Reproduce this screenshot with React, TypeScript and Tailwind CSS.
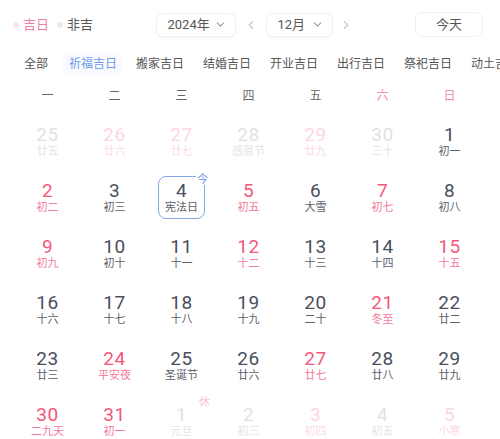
import React from 'react';
import { ChevronDown, ChevronLeft, ChevronRight } from 'lucide-react';

type Kind = 'n' | 'r' | 'fg' | 'fp';

interface Cell {
  day: number;
  lunar: string;
  kind: Kind;
  today?: boolean;
  badge?: string;
}

const c = (day: number, lunar: string, kind: Kind, extra: Partial<Cell> = {}): Cell => ({ day, lunar, kind, ...extra });

const weeks: Cell[][] = [
  [c(25, '廿五', 'fg'), c(26, '廿六', 'fp'), c(27, '廿七', 'fp'), c(28, '感恩节', 'fg'), c(29, '廿九', 'fp'), c(30, '三十', 'fg'), c(1, '初一', 'n')],
  [c(2, '初二', 'r'), c(3, '初三', 'n'), c(4, '宪法日', 'n', { today: true }), c(5, '初五', 'r'), c(6, '大雪', 'n'), c(7, '初七', 'r'), c(8, '初八', 'n')],
  [c(9, '初九', 'r'), c(10, '初十', 'n'), c(11, '十一', 'n'), c(12, '十二', 'r'), c(13, '十三', 'n'), c(14, '十四', 'n'), c(15, '十五', 'r')],
  [c(16, '十六', 'n'), c(17, '十七', 'n'), c(18, '十八', 'n'), c(19, '十九', 'n'), c(20, '二十', 'n'), c(21, '冬至', 'r'), c(22, '廿二', 'n')],
  [c(23, '廿三', 'n'), c(24, '平安夜', 'r'), c(25, '圣诞节', 'n'), c(26, '廿六', 'n'), c(27, '廿七', 'r'), c(28, '廿八', 'n'), c(29, '廿九', 'n')],
  [c(30, '二九天', 'r'), c(31, '初一', 'r'), c(1, '元旦', 'fg', { badge: '休' }), c(2, '初三', 'fg'), c(3, '初四', 'fp'), c(4, '初五', 'fg'), c(5, '小寒', 'fp')],
];

const weekdays = ['一', '二', '三', '四', '五', '六', '日'];
const tabs = ['全部', '祈福吉日', '搬家吉日', '结婚吉日', '开业吉日', '出行吉日', '祭祀吉日', '动土吉日'];

const numColor: Record<Kind, string> = {
  n: 'text-[#4a4f5d]',
  r: 'text-[#f5567c]',
  fg: 'text-[#e1e2e7]',
  fp: 'text-[#fdd7e0]',
};

const lunarColor: Record<Kind, string> = {
  n: 'text-[#5c606b]',
  r: 'text-[#f47a99]',
  fg: 'text-[#e3e4e9]',
  fp: 'text-[#fddbe3]',
};

const DayCell: React.FC<{ cell: Cell }> = ({ cell }) => (
  <div className="h-[56px] flex items-center justify-center">
    <div
      className={`relative w-[47px] h-[43px] flex flex-col items-center justify-center rounded-[8px] ${
        cell.today ? 'border-[1.5px] border-[#86a8e8]' : ''
      }`}
    >
      <span className={`text-[19px] leading-[21px] tracking-[0.5px] ${numColor[cell.kind]}`}>{cell.day}</span>
      <span className={`text-[11px] leading-[14px] ${lunarColor[cell.kind]}`}>{cell.lunar}</span>
      {cell.today && (
        <span className="absolute -top-[3px] -right-[5px] text-[11px] leading-none text-[#5d8ce8] bg-white px-[1px]">今</span>
      )}
      {cell.badge && (
        <span className="absolute -top-[3px] -right-[5px] text-[11px] leading-none text-[#f9c3d2]">{cell.badge}</span>
      )}
    </div>
  </div>
);

export default function App() {
  return (
    <div
      className="w-[500px] h-[439px] overflow-hidden bg-white"
      style={{ fontFamily: 'Roboto, "Noto Sans CJK SC", sans-serif' }}
    >
      {/* Header */}
      <div className="grid grid-cols-[1fr_auto_1fr] items-center pl-[13px] pr-[17px] pt-[12px] h-[37px]">
        <div className="flex items-center text-[13px]">
          <span className="w-[6px] h-[6px] rounded-full bg-[#fde3eb] mr-[4px]" />
          <span className="text-[#f07ea2]">吉日</span>
          <span className="w-[6px] h-[6px] rounded-full bg-[#e6eaf3] ml-[8px] mr-[4px]" />
          <span className="text-[#555]">非吉</span>
        </div>
        <div className="flex items-center text-[13px] text-[#555] ml-[12px]">
          <div className="w-[80px] h-[24px] border border-[#eef0f3] rounded-[6px] flex items-center justify-between pl-[11px] pr-[8px] shadow-[0_1px_2px_rgba(0,0,0,0.03)]">
            <span>2024年</span>
            <ChevronDown size={13} className="text-[#9a9a9a]" />
          </div>
          <ChevronLeft size={14} className="text-[#c8c8c8] mx-[8px]" />
          <div className="w-[67px] h-[24px] border border-[#eef0f3] rounded-[6px] flex items-center justify-between pl-[11px] pr-[8px] shadow-[0_1px_2px_rgba(0,0,0,0.03)]">
            <span>12月</span>
            <ChevronDown size={13} className="text-[#9a9a9a]" />
          </div>
          <ChevronRight size={14} className="text-[#c8c8c8] ml-[6px]" />
        </div>
        <div className="flex justify-end">
          <div className="w-[68px] h-[25px] border border-[#eef0f3] rounded-[7px] flex items-center justify-center text-[13px] text-[#555]">
            今天
          </div>
        </div>
      </div>

      {/* Tabs */}
      <div className="flex items-center gap-[7px] pl-[18px] mt-[15px] h-[24px] whitespace-nowrap text-[12px]">
        {tabs.map((t, i) => (
          <div
            key={t}
            className={`px-[6px] h-[22px] flex items-center rounded-[6px] shrink-0 ${
              i === 1 ? 'bg-[#f8faff] text-[#6f9be9] ml-[2px]' : 'text-[#555]'
            }`}
          >
            {t}
          </div>
        ))}
      </div>

      {/* Weekdays */}
      <div className="grid grid-cols-7 w-[469px] ml-[14px] mt-[10px] h-[20px] items-center">
        {weekdays.map((w, i) => (
          <div key={w} className={`text-center text-[12px] ${i >= 5 ? 'text-[#f38bab]' : 'text-[#666]'}`}>
            {w}
          </div>
        ))}
      </div>

      {/* Days */}
      <div className="grid grid-cols-7 w-[469px] ml-[14px] mt-[7px]">
        {weeks.flat().map((cell, i) => (
          <DayCell key={i} cell={cell} />
        ))}
      </div>
    </div>
  );
}
